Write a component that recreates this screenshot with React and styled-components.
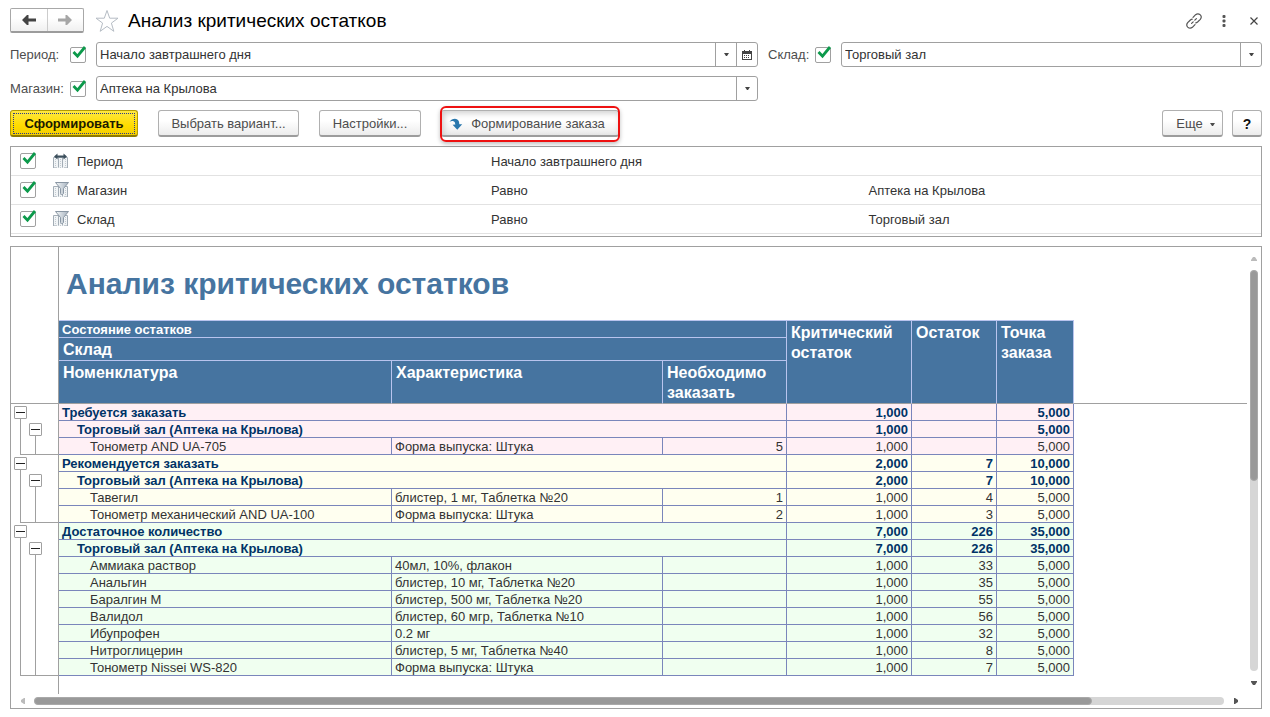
import React, { useState } from 'react';
import styled, { createGlobalStyle, css } from 'styled-components';

const GlobalStyle = createGlobalStyle`
  * {
    box-sizing: border-box;
  }

  body {
    margin: 0;
    background: #fff;
    color: #333;
    font-family: "Liberation Sans", Arial, sans-serif;
    font-size: 13px;
    line-height: 16px;
  }

  button,
  input {
    font: inherit;
    color: inherit;
  }
`;

const Page = styled.div`
  display: flex;
  flex-direction: column;
  gap: 9px;
  padding: 8px 8px 8px 10px;
`;

/* ---------- header ---------- */

const Header = styled.header`
  display: flex;
  align-items: center;
  height: 25px;
`;

const NavGroup = styled.div`
  display: flex;
  width: 74px;
  height: 25px;
  border: 1px solid #a8a8a8;
  border-bottom: 2px solid #9c9c9c;
  border-radius: 2px;
  background: linear-gradient(#fff 40%, #f0f0f0);
`;

const NavButton = styled.button`
  display: flex;
  flex: 1;
  align-items: center;
  justify-content: center;
  padding: 0;
  border: 0;
  background: none;
  color: ${props => (props.disabled ? '#a6a6a6' : '#444')};

  & + & {
    border-left: 1px solid #ccc;
  }
`;

const IconButton = styled.button`
  display: flex;
  align-items: center;
  justify-content: center;
  width: ${props => props.$width || 24}px;
  height: 24px;
  padding: 0;
  border: 0;
  background: none;
  color: #444;
`;

const StarButton = styled(IconButton)`
  margin: 0 9px 0 11px;
`;

const FormTitle = styled.h1`
  flex: 1;
  margin: 0;
  color: #000;
  font-size: 19px;
  font-weight: normal;
  line-height: 24px;
`;

const HeaderTools = styled.div`
  display: flex;
  align-items: center;
  gap: 14px;
`;

/* ---------- parameters ---------- */

const Params = styled.div`
  display: grid;
  grid-template-columns: 748fr 494fr;
  gap: 9px 10px;
`;

const Param = styled.div`
  display: flex;
  align-items: center;
  height: 25px;
`;

const ParamLabel = styled.label`
  width: ${props => props.$width}px;
  color: #4d4d4d;
`;

const CheckWrap = styled.span`
  position: relative;
  display: inline-block;
  flex: none;
  width: 16px;
  height: 16px;

  svg {
    position: absolute;
    left: 2px;
    top: -1px;
    pointer-events: none;
  }
`;

const CheckInput = styled.input`
  display: block;
  width: 16px;
  height: 16px;
  margin: 0;
  appearance: none;
  border: 1px solid #a0a0a0;
  border-radius: 2px;
  background: #fff;
`;

const Combo = styled.div`
  display: flex;
  flex: 1;
  min-width: 0;
  height: 25px;
  margin-left: 10px;
  border: 1px solid #a0a0a0;
  border-radius: 3px;
  background: #fff;
`;

const ComboInput = styled.input`
  flex: 1;
  min-width: 0;
  padding: 0 3px;
  border: 0;
  outline: 0;
  background: none;
`;

const ComboButton = styled.button`
  display: flex;
  align-items: center;
  justify-content: center;
  width: 21px;
  padding: 0;
  border: 0;
  border-left: 1px solid #a0a0a0;
  background: none;
  color: #444;
`;

/* ---------- command bar ---------- */

const CommandBar = styled.div`
  display: flex;
  gap: 20px;
  height: 27px;
`;

const RightCommands = styled.div`
  display: flex;
  gap: 9px;
  margin-left: auto;
`;

const Button = styled.button`
  display: flex;
  align-items: center;
  justify-content: center;
  width: ${props => props.$width}px;
  padding: 2px 0 0;
  border: 1px solid #b0b0b0;
  border-bottom: 2px solid #9c9c9c;
  border-radius: 3px;
  background: linear-gradient(#fff 40%, #ececec);
  color: #4d4d4d;
  white-space: nowrap;
`;

const PrimaryButton = styled(Button)`
  padding: 1px;
  border-color: #b59b00;
  border-bottom-color: #8f7b00;
  background: linear-gradient(#ffe840, #ffdc00 60%, #f5cf00);
  color: #1a1a00;
  font-weight: bold;

  span {
    flex: 1;
    margin: 1px;
    padding-top: 1px;
    border: 1px dotted #2b3a8c;
    line-height: 18px;
  }
`;

const OrderButton = styled(Button)`
  position: relative;
  gap: 8px;
  padding-right: 6px;
  box-shadow: inset 2px 2px 6px #ccc;

  &::after {
    content: '';
    position: absolute;
    inset: -5px -2px -7px;
    border: 2px solid #ee1111;
    border-radius: 6px;
    box-shadow: 0 2px 4px rgba(0, 0, 0, 0.25);
  }
`;

const HelpButton = styled(Button)`
  color: #111;
  font-size: 14px;
  font-weight: bold;
`;

const MoreButton = styled(Button)`
  gap: 7px;
  padding-left: 6px;
`;

/* ---------- filter list ---------- */

const FilterBox = styled.div`
  padding-bottom: 2px;
  border: 1px solid #a0a0a0;
`;

const FilterTable = styled.table`
  width: 100%;
  table-layout: fixed;
  border-spacing: 0;
`;

const FilterCell = styled.td`
  width: ${props => props.$width};
  height: 29px;
  padding: ${props => (props.$named ? 0 : '2px 0 0')};
  border-bottom: 1px solid #e2e2e2;
`;

const FilterName = styled.label`
  display: flex;
  align-items: center;
  padding-left: 9px;

  & > svg {
    margin: 0 8px 0 17px;
  }
`;

const FilterText = styled.span`
  padding-top: 2px;
`;

/* ---------- report ---------- */

const Report = styled.section`
  display: grid;
  grid-template-columns: minmax(0, 1fr) 14px;
  border: 1px solid #a0a0a0;
`;

const Sheet = styled.table`
  width: 100%;
  table-layout: fixed;
  border-spacing: 0;
  color: #333;
  line-height: 14px;
`;

const gutterLine = css`
  border-right: 1px solid #a0a0a0;
`;

const Gutter = styled.td`
  ${gutterLine}
  padding: 0 0 0 2px;
  background: ${props =>
    props.$last ? 'linear-gradient(#a0a0a0, #a0a0a0) 9px 100% / 100% 1px no-repeat' : 'none'};
`;

const HeadGutter = styled.td`
  ${gutterLine}
  padding: 0;
  border-bottom: ${props => (props.$end ? '1px solid #a0a0a0' : '0')};
`;

const Lanes = styled.div`
  display: flex;
  height: 17px;
`;

const Lane = styled.div`
  width: 15px;
  padding: 2px 1px;
  background: ${props =>
    props.$line
      ? `linear-gradient(#a0a0a0, #a0a0a0) 7px ${props.$half ? '15px' : '0'} / 1px 100% no-repeat`
      : 'none'};
`;

const Toggle = styled.button`
  display: flex;
  align-items: center;
  justify-content: center;
  width: 13px;
  height: 13px;
  padding: 0;
  border: 1px solid #a0a0a0;
  border-radius: 1px;
  background: #fff;

  &::before {
    content: '';
    width: 9px;
    height: 1px;
    background: #222;
  }
`;

const ReportTitle = styled.td`
  height: 73px;
  padding: 0 0 0 7px;
  color: #4674a0;
  font-size: 30px;
  font-weight: bold;
  line-height: 34px;
`;

const HeadCell = styled.th`
  height: ${props => props.$height}px;
  padding: ${props => (props.$small ? '1px 3px 0' : '2px 4px 0')};
  border-right: 1px solid #b9c4ee;
  border-bottom: 1px solid ${props => (props.$end ? '#a0a0a0' : '#b9c4ee')};
  border-top: ${props => (props.$top ? '1px solid #b9c4ee' : '0')};
  background: #4674a0;
  color: #fff;
  font-size: ${props => (props.$small ? 13 : 16)}px;
  line-height: ${props => (props.$small ? 15 : 20)}px;
  text-align: left;
  vertical-align: top;
`;

const Spacer = styled.td`
  padding: 0;
  border-bottom: ${props => (props.$end ? '1px solid #a0a0a0' : '0')};
`;

const tones = { pink: '#fff0f5', yellow: '#fffff0', green: '#f0fff0' };

const Row = styled.tr`
  color: ${props => (props.$level < 2 ? '#003366' : '#333')};
  font-weight: ${props => (props.$level < 2 ? 'bold' : 'normal')};
`;

const Cell = styled.td`
  height: 17px;
  padding: 2px 3px 0 ${props => props.$indent || 3}px;
  border-right: 1px solid #7a86bb;
  border-bottom: 1px solid #7a86bb;
  background: ${props => tones[props.$tone]};
  text-align: ${props => (props.$num ? 'right' : 'left')};
  white-space: nowrap;
`;

const TailGutter = styled.td`
  ${gutterLine}
  height: 18px;
  padding: 0;
`;

const ScrollBar = styled.div`
  display: flex;
  flex-direction: ${props => (props.$vertical ? 'column' : 'row')};
  align-items: center;
  ${props => (props.$vertical ? 'width' : 'height')}: 14px;
`;

const ScrollArrow = styled.button`
  display: flex;
  align-items: center;
  justify-content: center;
  width: ${props => (props.$vertical ? 14 : 23)}px;
  height: ${props => (props.$vertical ? 23 : 14)}px;
  padding: 0;
  border: 0;
  background: none;
  color: ${props => (props.disabled ? '#bbb' : '#555')};
`;

const Track = styled.div`
  flex: 1;
  ${props => (props.$vertical ? 'width' : 'height')}: 8px;
  border-radius: 4px;
  background: #d6d6d6;
`;

const Thumb = styled.div`
  width: 100%;
  height: 100%;
  border: 1px solid #a9a9a9;
  border-radius: 4px;
  background: #999;
`;

/* ---------- icons ---------- */

const ArrowIcon = ({ flip }) => (
  <svg width="14" height="10" viewBox="0 0 14 10" transform={flip ? 'scale(-1 1)' : undefined}>
    <path d="M0 5L5 0H6.5V3.5H14V6.5H6.5V10H5Z" fill="currentColor" />
  </svg>
);

const StarIcon = () => (
  <svg width="24" height="24" viewBox="0 0 24 24" fill="#fff" stroke="#b5bcc4">
    <path d="M12 1.5L14.7 9.2H23L16.4 14.1L18.8 22.3L12 17.4L5.2 22.3L7.6 14.1L1 9.2H9.3Z" />
  </svg>
);

const LinkIcon = () => (
  <svg width="16" height="16" viewBox="0 0 16 16" fill="none" stroke="#555" strokeWidth="1.2" strokeLinecap="round">
    <path d="M7 4.3L9.6 1.7Q12 -0.2 14.3 1.9Q16.2 4 14.3 6.4L11.6 9Q10.6 9.8 9.8 9.9" />
    <path d="M9 11.7L6.4 14.3Q4 16.2 1.7 14.1Q-0.2 12 1.7 9.6L4.4 7Q5.4 6.2 6.2 6.1" />
    <path d="M5.6 10.4L7.2 8.8M8.8 7.2L10.4 5.6" />
  </svg>
);

const DotsIcon = () => (
  <svg width="4" height="12" viewBox="0 0 4 12" fill="#555">
    <rect x="0.5" y="0" width="3" height="3" rx="1" />
    <rect x="0.5" y="4.5" width="3" height="3" rx="1" />
    <rect x="0.5" y="9" width="3" height="3" rx="1" />
  </svg>
);

const CloseIcon = () => (
  <svg width="8" height="8" viewBox="0 0 8 8" stroke="#444" strokeWidth="1.2">
    <path d="M0.5 0.5L7.5 7.5M7.5 0.5L0.5 7.5" />
  </svg>
);

const CheckMark = () => (
  <svg width="15" height="14" viewBox="0 0 15 14" fill="none" stroke="#0c9a4b" strokeWidth="2.8">
    <path d="M1.5 6L5.5 10.2L13 1" />
  </svg>
);

const CaretIcon = () => (
  <svg width="5" height="3" viewBox="0 0 5 3" fill="currentColor">
    <path d="M0 0H5L3 3H2Z" />
  </svg>
);

const CalendarIcon = () => (
  <svg width="10" height="10" viewBox="0 0 10 10" fill="#444">
    <path d="M0 1H2V0H3V1H7V0H8V1H10V10H0ZM1 4V9H9V4Z" fillRule="evenodd" />
    <path d="M2 5H3V6H2ZM4 5H5V6H4ZM6 5H7V6H6ZM2 7H3V8H2ZM4 7H5V8H4ZM6 7H7V8H6Z" />
  </svg>
);

const OrderIcon = () => (
  <svg width="14" height="13" viewBox="0 0 14 13">
    <path d="M0.5 3.8Q2.5 0.8 6 0.8Q10.3 1 10.3 6.2H13.2L8.3 11.8L3.6 6.8L6.4 6.4Q6.2 3.4 4 3Q2 2.8 0.5 3.8Z" fill="#2a78ad" />
  </svg>
);

const Columns = () => (
  <>
    <path d="M1 4H14V15H1Z" fill="#f1f4f6" />
    <path d="M0.5 15V4.5H14.5V15M5.5 4.5V15M9.5 4.5V15" stroke="#a3adb6" />
    <path d="M2.5 6V15M7.5 6V15M12.5 6V15M1 14.5H15" stroke="#c3cad0" strokeDasharray="1 1" />
  </>
);

const PeriodIcon = () => (
  <svg width="16" height="16" viewBox="0 0 16 16" fill="none">
    <Columns />
    <path d="M1 3.5L4.5 0.5V2.5H10.5V0.5L14 3.5L10.5 6.5V4.5H4.5V6.5Z" fill="#3c4f5c" />
  </svg>
);

const FilterIcon = () => (
  <svg width="16" height="16" viewBox="0 0 16 16" fill="none">
    <defs>
      <linearGradient id="funnel" x1="0" y1="0" x2="1" y2="0">
        <stop offset="0" stopColor="#f4f7f9" />
        <stop offset="1" stopColor="#a5b1bd" />
      </linearGradient>
    </defs>
    <Columns />
    <path d="M2.5 0.5H15.5L10.5 6.5V11.5L9.5 12.5H8.5L7.5 11.5V6.5Z" fill="url(#funnel)" stroke="#8a97a4" />
  </svg>
);

const rotations = { up: 180, down: 0, left: 90, right: 270 };

const ScrollIcon = ({ dir }) => (
  <svg width="6" height="6" viewBox="0 0 6 6" fill="currentColor">
    <path d="M0 1H6V2L4 5H2L0 2Z" transform={`rotate(${rotations[dir]} 3 3)`} />
  </svg>
);

/* ---------- data ---------- */

const filters = [
  { name: 'Период', icon: PeriodIcon, condition: 'Начало завтрашнего дня', value: '' },
  { name: 'Магазин', icon: FilterIcon, condition: 'Равно', value: 'Аптека на Крылова' },
  { name: 'Склад', icon: FilterIcon, condition: 'Равно', value: 'Торговый зал' },
];

const store = 'Торговый зал (Аптека на Крылова)';

const groups = [
  {
    name: 'Требуется заказать',
    tone: 'pink',
    totals: ['1,000', '', '5,000'],
    items: [['Тонометр AND UA-705', 'Форма выпуска: Штука', '5', '1,000', '', '5,000']],
  },
  {
    name: 'Рекомендуется заказать',
    tone: 'yellow',
    totals: ['2,000', '7', '10,000'],
    items: [
      ['Тавегил', 'блистер, 1 мг, Таблетка №20', '1', '1,000', '4', '5,000'],
      ['Тонометр механический AND UA-100', 'Форма выпуска: Штука', '2', '1,000', '3', '5,000'],
    ],
  },
  {
    name: 'Достаточное количество',
    tone: 'green',
    totals: ['7,000', '226', '35,000'],
    items: [
      ['Аммиака раствор', '40мл, 10%, флакон', '', '1,000', '33', '5,000'],
      ['Анальгин', 'блистер, 10 мг, Таблетка №20', '', '1,000', '35', '5,000'],
      ['Баралгин М', 'блистер, 500 мг, Таблетка №20', '', '1,000', '55', '5,000'],
      ['Валидол', 'блистер, 60 мгр, Таблетка №10', '', '1,000', '56', '5,000'],
      ['Ибупрофен', '0.2 мг', '', '1,000', '32', '5,000'],
      ['Нитроглицерин', 'блистер, 5 мг, Таблетка №40', '', '1,000', '8', '5,000'],
      ['Тонометр Nissei WS-820', 'Форма выпуска: Штука', '', '1,000', '7', '5,000'],
    ],
  },
];

/* ---------- parts ---------- */

function Check({ id, label }) {
  const [checked, setChecked] = useState(true);

  return (
    <CheckWrap>
      <CheckInput
        id={id}
        type="checkbox"
        aria-label={label}
        checked={checked}
        onChange={e => setChecked(e.target.checked)}
      />
      {checked && <CheckMark />}
    </CheckWrap>
  );
}

function ParamField({ id, label, labelWidth, initial, calendar }) {
  const [value, setValue] = useState(initial);

  return (
    <Param>
      <ParamLabel $width={labelWidth} htmlFor={id}>{label}:</ParamLabel>
      <Check label={`Использовать: ${label}`} />
      <Combo>
        <ComboInput id={id} type="text" value={value} onChange={e => setValue(e.target.value)} />
        <ComboButton type="button" aria-label="Выбрать из списка"><CaretIcon /></ComboButton>
        {calendar && <ComboButton type="button" aria-label="Календарь"><CalendarIcon /></ComboButton>}
      </Combo>
    </Param>
  );
}

function GutterCell({ level, last }) {
  return (
    <Gutter $last={last}>
      <Lanes>
        <Lane $line $half={level === 0}>
          {level === 0 && <Toggle type="button" aria-label="Свернуть" />}
        </Lane>
        <Lane $line={level > 0} $half={level === 1}>
          {level === 1 && <Toggle type="button" aria-label="Свернуть" />}
        </Lane>
      </Lanes>
    </Gutter>
  );
}

function TotalRow({ level, name, tone, totals }) {
  return (
    <Row $level={level}>
      <GutterCell level={level} />
      <Cell $tone={tone} $indent={level === 0 ? 3 : 18} colSpan={3}>{name}</Cell>
      {totals.map((total, i) => <Cell key={i} $tone={tone} $num>{total}</Cell>)}
      <Spacer />
    </Row>
  );
}

function ItemRow({ item, tone, last }) {
  return (
    <Row $level={2}>
      <GutterCell level={2} last={last} />
      {item.map((text, i) => (
        <Cell key={i} $tone={tone} $indent={i === 0 ? 31 : 3} $num={i > 1}>{text}</Cell>
      ))}
      <Spacer />
    </Row>
  );
}

function Scroller({ vertical, size }) {
  return (
    <ScrollBar $vertical={vertical}>
      <ScrollArrow type="button" $vertical={vertical} disabled aria-label="Назад">
        <ScrollIcon dir={vertical ? 'up' : 'left'} />
      </ScrollArrow>
      <Track $vertical={vertical}>
        <Thumb style={vertical ? { height: size } : { width: size }} />
      </Track>
      <ScrollArrow type="button" $vertical={vertical} aria-label="Вперед">
        <ScrollIcon dir={vertical ? 'down' : 'right'} />
      </ScrollArrow>
    </ScrollBar>
  );
}

function ReportSheet() {
  return (
    <Sheet>
      <colgroup>
        <col width="48" />
        <col width="333" />
        <col width="271" />
        <col width="124" />
        <col width="125" />
        <col width="85" />
        <col width="77" />
        <col />
      </colgroup>
      <thead>
        <tr>
          <HeadGutter />
          <ReportTitle colSpan={7}>Анализ критических остатков</ReportTitle>
        </tr>
        <tr>
          <HeadGutter />
          <HeadCell $top $small $height={18} colSpan={3}>Состояние остатков</HeadCell>
          <HeadCell $top $end rowSpan={3}>Критический остаток</HeadCell>
          <HeadCell $top $end rowSpan={3}>Остаток</HeadCell>
          <HeadCell $top $end rowSpan={3}>Точка заказа</HeadCell>
          <Spacer $end rowSpan={3} />
        </tr>
        <tr>
          <HeadGutter />
          <HeadCell $height={23} colSpan={3}>Склад</HeadCell>
        </tr>
        <tr>
          <HeadGutter $end />
          <HeadCell $end $height={43}>Номенклатура</HeadCell>
          <HeadCell $end>Характеристика</HeadCell>
          <HeadCell $end>Необходимо заказать</HeadCell>
        </tr>
      </thead>
      <tbody>
        {groups.map(group => (
          <React.Fragment key={group.name}>
            <TotalRow level={0} name={group.name} tone={group.tone} totals={group.totals} />
            <TotalRow level={1} name={store} tone={group.tone} totals={group.totals} />
            {group.items.map((item, i) => (
              <ItemRow key={item[0]} item={item} tone={group.tone} last={i === group.items.length - 1} />
            ))}
          </React.Fragment>
        ))}
        <tr>
          <TailGutter />
          <Spacer colSpan={7} />
        </tr>
      </tbody>
    </Sheet>
  );
}

function App() {
  return (
    <>
      <GlobalStyle />
      <Page>
        <Header>
          <NavGroup>
            <NavButton type="button" aria-label="Назад"><ArrowIcon /></NavButton>
            <NavButton type="button" aria-label="Вперед" disabled><ArrowIcon flip /></NavButton>
          </NavGroup>
          <StarButton type="button" aria-label="В избранное"><StarIcon /></StarButton>
          <FormTitle>Анализ критических остатков</FormTitle>
          <HeaderTools>
            <IconButton type="button" $width={16} aria-label="Ссылка"><LinkIcon /></IconButton>
            <IconButton type="button" $width={16} aria-label="Меню"><DotsIcon /></IconButton>
            <IconButton type="button" $width={16} aria-label="Закрыть"><CloseIcon /></IconButton>
          </HeaderTools>
        </Header>

        <Params>
          <ParamField id="period" label="Период" labelWidth={60} initial="Начало завтрашнего дня" calendar />
          <ParamField id="warehouse" label="Склад" labelWidth={47} initial="Торговый зал" />
          <ParamField id="shop" label="Магазин" labelWidth={60} initial="Аптека на Крылова" />
        </Params>

        <CommandBar>
          <PrimaryButton type="button" $width={128}><span>Сформировать</span></PrimaryButton>
          <Button type="button" $width={141}>Выбрать вариант...</Button>
          <Button type="button" $width={102}>Настройки...</Button>
          <OrderButton type="button" $width={178}><OrderIcon />Формирование заказа</OrderButton>
          <RightCommands>
            <MoreButton type="button" $width={61}>Еще <CaretIcon /></MoreButton>
            <HelpButton type="button" $width={30}>?</HelpButton>
          </RightCommands>
        </CommandBar>

        <FilterBox>
          <FilterTable>
            <tbody>
              {filters.map(({ name, icon: Icon, condition, value }) => (
                <tr key={name}>
                  <FilterCell $named $width="38.4%">
                    <FilterName>
                      <Check />
                      <Icon />
                      <FilterText>{name}</FilterText>
                    </FilterName>
                  </FilterCell>
                  <FilterCell $width="30.2%">{condition}</FilterCell>
                  <FilterCell>{value}</FilterCell>
                </tr>
              ))}
            </tbody>
          </FilterTable>
        </FilterBox>

        <Report>
          <ReportSheet />
          <Scroller vertical size="52.6%" />
          <Scroller size="88.9%" />
        </Report>
      </Page>
    </>
  );
}

export default App;
